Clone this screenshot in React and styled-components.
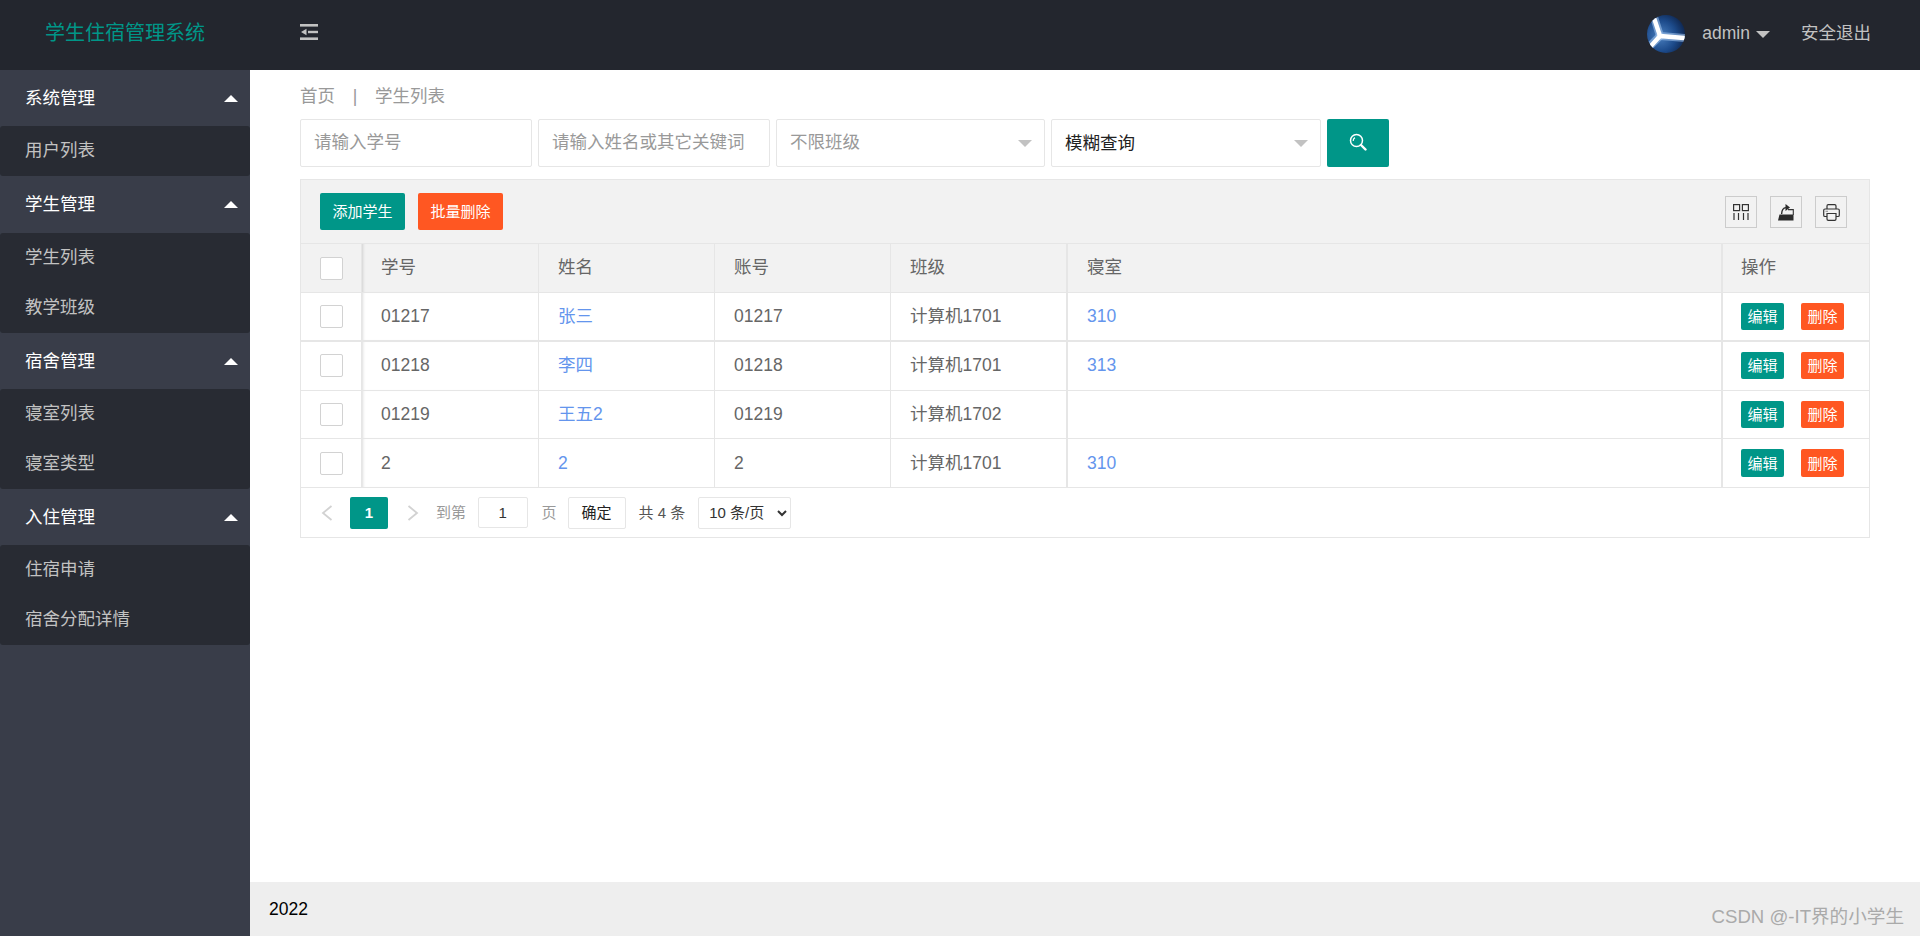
import React from 'react';
import styled, { createGlobalStyle } from 'styled-components';

const GlobalStyle = createGlobalStyle`
html, body {
  margin: 0;
  padding: 0;
  height: 100%;
  background: #fff;
  font-family: "Liberation Sans", "Noto Sans CJK SC", sans-serif;
  font-size: 17.5px;
  line-height: 24px;
  color: #666;
}
* { box-sizing: border-box; }
`;

const menus = [
  { title: '系统管理', items: ['用户列表'] },
  { title: '学生管理', items: ['学生列表', '教学班级'] },
  { title: '宿舍管理', items: ['寝室列表', '寝室类型'] },
  { title: '入住管理', items: ['住宿申请', '宿舍分配详情'] },
];

const students = [
  { no: '01217', name: '张三', account: '01217', klass: '计算机1701', room: '310' },
  { no: '01218', name: '李四', account: '01218', klass: '计算机1701', room: '313' },
  { no: '01219', name: '王五2', account: '01219', klass: '计算机1702', room: '' },
  { no: '2', name: '2', account: '2', klass: '计算机1701', room: '310' },
];

const colWidths = [61, 177, 176, 176, 177, 655, 146];

const HamburgerIcon = () => (
  <svg width="18" height="16" viewBox="0 0 18 16">
    <rect x="0" y="0" width="18" height="2.6" fill="#c2c2c2" />
    <rect x="8" y="6.8" width="10" height="2.4" fill="#c2c2c2" />
    <path d="M1 8 L6.5 4.8 V11.2 Z" fill="#c2c2c2" />
    <rect x="0" y="13.4" width="18" height="2.6" fill="#c2c2c2" />
  </svg>
);

const AvatarImage = () => (
  <svg width="38" height="38" viewBox="0 0 38 38">
    <defs>
      <radialGradient id="avatarBg" cx="0.35" cy="0.55" r="0.75">
        <stop offset="0" stopColor="#4a80c0" />
        <stop offset="0.55" stopColor="#1c4a8a" />
        <stop offset="1" stopColor="#0b1c3e" />
      </radialGradient>
      <clipPath id="avatarClip"><circle cx="19" cy="19" r="19" /></clipPath>
    </defs>
    <g clipPath="url(#avatarClip)">
      <rect width="38" height="38" fill="url(#avatarBg)" />
      <g stroke="#9cc0ea" strokeWidth="8" strokeOpacity="0.6" fill="none" strokeLinecap="round">
        <path d="M7 2 L13 21 L38 23" />
        <path d="M13 21 L1 33" />
      </g>
      <g stroke="#fff" strokeWidth="4.4" fill="none" strokeLinecap="round" strokeLinejoin="round">
        <path d="M7 3 L13 21 L37 23" />
        <path d="M13 21 L3 32" />
      </g>
    </g>
  </svg>
);

const SearchIcon = () => (
  <svg width="18" height="18" viewBox="0 0 18 18" fill="none" stroke="#fff">
    <circle cx="7.5" cy="7.5" r="6" strokeWidth="1.5" />
    <path d="M4.2 8 A3.4 3.4 0 0 1 6 4.6" strokeWidth="1.2" />
    <path d="M12 12 L16.5 16.5" strokeWidth="2.4" strokeLinecap="round" />
  </svg>
);

const ColsIcon = () => (
  <svg width="16" height="16" viewBox="0 0 16 16" fill="none" stroke="#333" strokeWidth="1.2">
    <rect x="0.6" y="0.6" width="6" height="6" />
    <rect x="9.4" y="0.6" width="6" height="6" />
    <path d="M1 9 V16 M5.5 9 V16 M10.5 9 V16 M15 9 V16" />
  </svg>
);

const ExportIcon = () => (
  <svg width="16" height="18" viewBox="0 0 16 18">
    <path d="M0 17.5 L1.5 11.5 H15.5 V17.5 Z" fill="#2b2b2b" />
    <path d="M10 6.6 H15.3 V12" fill="none" stroke="#333" strokeWidth="1.1" />
    <path d="M3.6 11 C3.8 7 5.5 4.8 8 4.6" fill="none" stroke="#2b2b2b" strokeWidth="1.4" />
    <path d="M7.5 1 L12 4.6 L7.5 8 Z" fill="#2b2b2b" />
  </svg>
);

const PrintIcon = () => (
  <svg width="17" height="17" viewBox="0 0 17 17" fill="none" stroke="#333" strokeWidth="1.2">
    <path d="M4 5 V2 Q4 0.7 5.3 0.7 H11.7 Q13 0.7 13 2 V5" />
    <path d="M4 12.5 H2 Q0.7 12.5 0.7 11.2 V6.3 Q0.7 5 2 5 H15 Q16.3 5 16.3 6.3 V11.2 Q16.3 12.5 15 12.5 H13" />
    <path d="M4 9.5 H13 V15 Q13 16.3 11.7 16.3 H5.3 Q4 16.3 4 15 Z" />
    <path d="M2.5 7.3 H5" stroke="#999" />
  </svg>
);

const Chevron = ({ left }) => (
  <svg width="12" height="16" viewBox="0 0 12 16" fill="none" stroke="#d2d2d2" strokeWidth="1.8">
    <path d={left ? 'M10.5 1 L2 8 L10.5 15' : 'M1.5 1 L10 8 L1.5 15'} />
  </svg>
);

export default function App() {
  return (
    <Page>
      <GlobalStyle />
      <TopBar>
        <Brand>学生住宿管理系统</Brand>
        <MenuToggle><HamburgerIcon /></MenuToggle>
        <TopRight>
          <Avatar><AvatarImage /></Avatar>
          <UserName>admin</UserName>
          <UserCaret />
          <Logout>安全退出</Logout>
        </TopRight>
      </TopBar>

      <Body>
        <Sidebar>
          {menus.map((menu) => (
            <div key={menu.title}>
              <GroupTitle>
                {menu.title}
                <GroupCaret />
              </GroupTitle>
              <GroupItems>
                {menu.items.map((item) => (
                  <MenuItem key={item}>{item}</MenuItem>
                ))}
              </GroupItems>
            </div>
          ))}
        </Sidebar>

        <Main>
          <Content>
            <Breadcrumb>
              <span>首页</span>
              <CrumbSep>|</CrumbSep>
              <span>学生列表</span>
            </Breadcrumb>

            <SearchRow>
              <SearchInput $w={232} placeholder="请输入学号" />
              <SearchInput $w={232} placeholder="请输入姓名或其它关键词" />
              <FakeSelect $w={269}>
                不限班级
                <SelectCaret />
              </FakeSelect>
              <FakeSelect $w={270} $filled>
                模糊查询
                <SelectCaret />
              </FakeSelect>
              <SearchButton><SearchIcon /></SearchButton>
            </SearchRow>

            <TableBox>
              <Toolbar>
                <ToolButton $color="#009688">添加学生</ToolButton>
                <ToolButton $color="#FF5722">批量删除</ToolButton>
                <ToolIcons>
                  <ToolIcon><ColsIcon /></ToolIcon>
                  <ToolIcon><ExportIcon /></ToolIcon>
                  <ToolIcon><PrintIcon /></ToolIcon>
                </ToolIcons>
              </Toolbar>

              <DataTable>
                <colgroup>
                  {colWidths.map((w, i) => <col key={i} width={w} />)}
                </colgroup>
                <thead>
                  <tr>
                    <th><CheckBox /></th>
                    <th>学号</th>
                    <th>姓名</th>
                    <th>账号</th>
                    <th>班级</th>
                    <th>寝室</th>
                    <th>操作</th>
                  </tr>
                </thead>
                <tbody>
                  {students.map((s) => (
                    <tr key={s.no}>
                      <td><CheckBox /></td>
                      <td>{s.no}</td>
                      <td><CellLink>{s.name}</CellLink></td>
                      <td>{s.account}</td>
                      <td>{s.klass}</td>
                      <td><CellLink>{s.room}</CellLink></td>
                      <td>
                        <RowButton $color="#009688">编辑</RowButton>
                        <RowButton $color="#FF5722">删除</RowButton>
                      </td>
                    </tr>
                  ))}
                </tbody>
              </DataTable>

              <Pager>
                <PagerArrow><Chevron left /></PagerArrow>
                <PageCurrent>1</PageCurrent>
                <PagerArrow $next><Chevron /></PagerArrow>
                <PagerLabel>到第</PagerLabel>
                <PageInput defaultValue="1" />
                <PagerLabel $gap={14}>页</PagerLabel>
                <PageConfirm>确定</PageConfirm>
                <PagerTotal>共 4 条</PagerTotal>
                <PageSize defaultValue="10">
                  <option value="10">10 条/页</option>
                  <option value="20">20 条/页</option>
                  <option value="30">30 条/页</option>
                </PageSize>
              </Pager>
            </TableBox>
          </Content>

          <Footer>2022</Footer>
        </Main>
      </Body>

      <Watermark>CSDN @-IT界的小学生</Watermark>
    </Page>
  );
}

const Page = styled.div`
  position: relative;
  height: 100vh;
  display: flex;
  flex-direction: column;
  overflow: hidden;
`;

const TopBar = styled.header`
  height: 70px;
  flex: none;
  background: #23262e;
  display: flex;
  align-items: center;
  padding: 0 49px 5px 45px;
`;

const Brand = styled.div`
  width: 255px;
  font-size: 20px;
  color: #009688;
`;

const MenuToggle = styled.div`
  display: flex;
  margin-top: -1px;
`;

const TopRight = styled.div`
  margin-left: auto;
  display: flex;
  align-items: center;
  color: #c2c2c2;
`;

const Avatar = styled.div`
  width: 38px;
  height: 38px;
  margin-top: 3px;
  display: flex;
`;

const UserName = styled.span`
  margin-left: 17px;
`;

const UserCaret = styled.i`
  margin: 3px 0 0 6px;
  border-style: solid;
  border-width: 7px 7.5px 0;
  border-color: #c2c2c2 transparent transparent;
`;

const Logout = styled.span`
  margin-left: 31px;
`;

const Body = styled.div`
  flex: 1;
  display: flex;
  min-height: 0;
`;

const Sidebar = styled.aside`
  width: 250px;
  flex: none;
  background: #393d49;
`;

const GroupTitle = styled.div`
  height: 56.25px;
  padding: 0 12px 0 25px;
  display: flex;
  align-items: center;
  justify-content: space-between;
  color: #fff;
`;

const GroupCaret = styled.i`
  border-style: solid;
  border-width: 0 7.5px 7.5px;
  border-color: transparent transparent #fff;
  margin-top: 1px;
`;

const GroupItems = styled.div`
  background: #282b33;
  border-radius: 3px;
`;

const MenuItem = styled.div`
  height: 50px;
  line-height: 49px;
  padding-left: 25px;
  color: #c2c2c2;
`;

const Main = styled.main`
  flex: 1;
  min-width: 0;
  display: flex;
  flex-direction: column;
`;

const Content = styled.div`
  flex: 1;
  padding: 14px 50px 0 50px;
`;

const Breadcrumb = styled.div`
  height: 24px;
  color: #999;
  display: flex;
`;

const CrumbSep = styled.span`
  width: 40px;
  text-align: center;
`;

const SearchRow = styled.div`
  display: flex;
  gap: 6px;
  margin-top: 11px;
`;

const SearchInput = styled.input`
  width: ${(p) => p.$w}px;
  height: 48px;
  padding: 0 13px 2px;
  border: 1px solid #e6e6e6;
  border-radius: 2px;
  outline: none;
  font: inherit;
  color: #666;
  &::placeholder {
    color: #999;
    opacity: 1;
  }
`;

const FakeSelect = styled.div`
  position: relative;
  width: ${(p) => p.$w}px;
  height: 48px;
  padding: ${(p) => (p.$filled ? '0 13px' : '0 13px 2px')};
  border: 1px solid #e6e6e6;
  border-radius: 2px;
  display: flex;
  align-items: center;
  color: ${(p) => (p.$filled ? '#222' : '#999')};
`;

const SelectCaret = styled.i`
  position: absolute;
  right: 12px;
  top: 20px;
  border-style: solid;
  border-width: 7px 7px 0;
  border-color: #c2c2c2 transparent transparent;
`;

const SearchButton = styled.button`
  width: 62px;
  height: 48px;
  border: 0;
  border-radius: 2px;
  padding: 0 0 2px;
  background: #009688;
  display: flex;
  align-items: center;
  justify-content: center;
`;

const TableBox = styled.div`
  margin-top: 12px;
  border: 1px solid #e6e6e6;
`;

const Toolbar = styled.div`
  height: 63px;
  padding: 13px 22px 0 19px;
  background: #f2f2f2;
  display: flex;
  align-items: flex-start;
  gap: 13px;
`;

const ToolButton = styled.button`
  width: 85px;
  height: 37px;
  padding: 0;
  border: 0;
  border-radius: 2px;
  background: ${(p) => p.$color};
  color: #fff;
  font: inherit;
  font-size: 15px;
`;

const ToolIcons = styled.div`
  margin-left: auto;
  margin-top: 3px;
  display: flex;
  gap: 13px;
`;

const ToolIcon = styled.div`
  width: 32px;
  height: 32px;
  border: 1px solid #ccc;
  display: flex;
  align-items: center;
  justify-content: center;
`;

const DataTable = styled.table`
  width: 100%;
  table-layout: fixed;
  border-collapse: separate;
  border-spacing: 0;

  th, td {
    height: 48.75px;
    padding: 0 19px 1px;
    font-weight: 400;
    text-align: left;
    color: #666;
    border-bottom: 1px solid #e6e6e6;
    border-right: 1px solid #e6e6e6;
    white-space: nowrap;
  }
  th {
    height: 50px;
    padding-bottom: 2px;
    background: #f2f2f2;
    border-top: 1px solid #e6e6e6;
  }
  tbody tr:first-child td {
    border-bottom-width: 2px;
  }
  th:nth-child(1), td:nth-child(1) {
    padding: 0 0 0 19px;
    line-height: 0;
  }
  th:nth-child(2), td:nth-child(2) {
    box-shadow: inset 3px 0 3px -2px rgba(0, 0, 0, 0.14);
  }
  th:nth-child(5), td:nth-child(5), th:nth-child(6), td:nth-child(6) {
    border-right-width: 2px;
  }
  th:nth-child(7), td:nth-child(7) {
    border-right: 0;
    padding-left: 18px;
    padding-right: 0;
  }
  td:nth-child(7) {
    padding-bottom: 0;
  }
`;

const CheckBox = styled.span`
  display: inline-block;
  width: 23px;
  height: 23px;
  background: #fff;
  border: 1px solid #d2d2d2;
  border-radius: 2px;
`;

const CellLink = styled.span`
  color: #6495ed;
`;

const RowButton = styled.button`
  width: 43px;
  height: 27.5px;
  margin-right: 17px;
  padding: 0;
  border: 0;
  border-radius: 2px;
  background: ${(p) => p.$color};
  color: #fff;
  font: inherit;
  font-size: 15px;
  line-height: 27px;
  vertical-align: middle;
`;

const Pager = styled.div`
  height: 49px;
  padding-left: 20px;
  display: flex;
  align-items: center;
  font-size: 15px;
`;

const PagerArrow = styled.span`
  display: flex;
  margin-left: ${(p) => (p.$next ? '19px' : '0')};
`;

const PageCurrent = styled.span`
  width: 38px;
  height: 32px;
  margin-left: 17px;
  background: #009688;
  border-radius: 2px;
  color: #fff;
  font-weight: 700;
  display: flex;
  align-items: center;
  justify-content: center;
`;

const PagerLabel = styled.span`
  margin-left: ${(p) => p.$gap || 17}px;
  color: #999;
`;

const PageInput = styled.input`
  width: 49.5px;
  height: 31.5px;
  margin-left: 12px;
  padding: 0;
  border: 1px solid #e6e6e6;
  border-radius: 2px;
  outline: none;
  text-align: center;
  font: inherit;
  color: #333;
`;

const PageConfirm = styled.button`
  width: 58px;
  height: 32px;
  margin-left: 11px;
  padding: 0;
  background: #fff;
  border: 1px solid #e6e6e6;
  border-radius: 2px;
  font: inherit;
  color: #222;
`;

const PagerTotal = styled.span`
  margin-left: 13px;
  color: #555;
`;

const PageSize = styled.select`
  width: 93px;
  height: 32px;
  margin-left: 13px;
  padding: 0 0 0 6px;
  background: #fff;
  border: 1px solid #e6e6e6;
  border-radius: 2px;
  outline: none;
  font: inherit;
  color: #333;
`;

const Footer = styled.footer`
  height: 54px;
  flex: none;
  padding-left: 19px;
  background: #eee;
  color: #000;
  display: flex;
  align-items: center;
`;

const Watermark = styled.div`
  position: absolute;
  right: 16px;
  bottom: 7px;
  font-size: 18.6px;
  color: #aaa;
  white-space: nowrap;
`;
